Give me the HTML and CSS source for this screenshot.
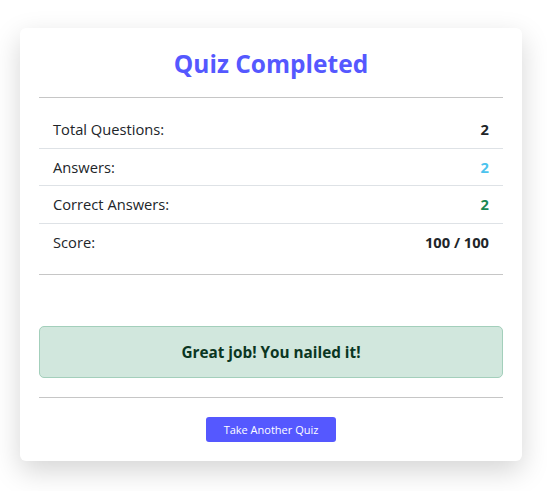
FILE: index.html
```html
<!DOCTYPE html>
<html lang="en">
<head>
<meta charset="utf-8">
<title>Quiz Completed</title>
<link rel="stylesheet" href="styles.css">
</head>
<body>
<div class="card">
  <h1 class="title">Quiz Completed</h1>
  <hr class="rule">
  <div class="stats">
    <div class="row"><span class="label">Total Questions:</span><span class="value">2</span></div>
    <div class="row"><span class="label">Answers:</span><span class="value info">2</span></div>
    <div class="row"><span class="label">Correct Answers:</span><span class="value success">2</span></div>
    <div class="row"><span class="label">Score:</span><span class="value">100 / 100</span></div>
  </div>
  <hr class="rule rule-after-stats">
  <div class="alert">Great job! You nailed it!</div>
  <hr class="rule">
  <div class="actions">
    <button class="btn">Take Another Quiz</button>
  </div>
</div>
</body>
</html>
```
FILE: styles.css
```css
* { box-sizing: border-box; }
html, body { margin: 0; padding: 0; background: #ffffff; }
body {
  font-family: "Open Sans", "Noto Sans", sans-serif;
  color: #212529;
  padding: 28px 25px 30px 20px;
  min-height: 491px;
}
.card {
  width: 502px;
  background: #fff;
  border-radius: 6px;
  padding: 19px 19px 19px 19px;
  box-shadow: 0 10px 28px rgba(0, 0, 0, 0.17);
}
.title {
  margin: 0;
  text-align: center;
  font-size: 24.5px;
  line-height: 33px;
  font-weight: 700;
  color: #5558ff;
}
.rule {
  border: 0;
  border-top: 1px solid #c6c6c6;
  margin: 17px 0 0 0;
  height: 0;
}
.stats {
  margin-top: 13px;
  display: flex;
  flex-direction: column;
}
.row {
  display: flex;
  justify-content: space-between;
  align-items: center;
  padding: 7px 14px;
  line-height: 22.5px;
  font-size: 14.7px;
  border-bottom: 1px solid #dee2e6;
}
.row:last-child { border-bottom: 0; }
.label { font-weight: 400; }
.value { font-weight: 700; }
.value.info { color: #4cc3ee; }
.value.success { color: #198754; }
.rule-after-stats { margin-top: 14px; }
.alert {
  margin-top: 51px;
  background: #d1e7dd;
  border: 1px solid #a3cfbb;
  color: #0a3622;
  border-radius: 5px;
  padding: 14px;
  line-height: 22px;
  font-size: 15.3px;
  font-weight: 700;
  text-align: center;
}
.alert + .rule { margin-top: 19px; }
.actions {
  display: flex;
  justify-content: center;
  margin-top: 19px;
}
.btn {
  width: 130px;
  height: 25px;
  background: #5558ff;
  color: #fff;
  border: 0;
  border-radius: 3px;
  font-family: inherit;
  font-size: 11px;
  padding: 0;
}
```
